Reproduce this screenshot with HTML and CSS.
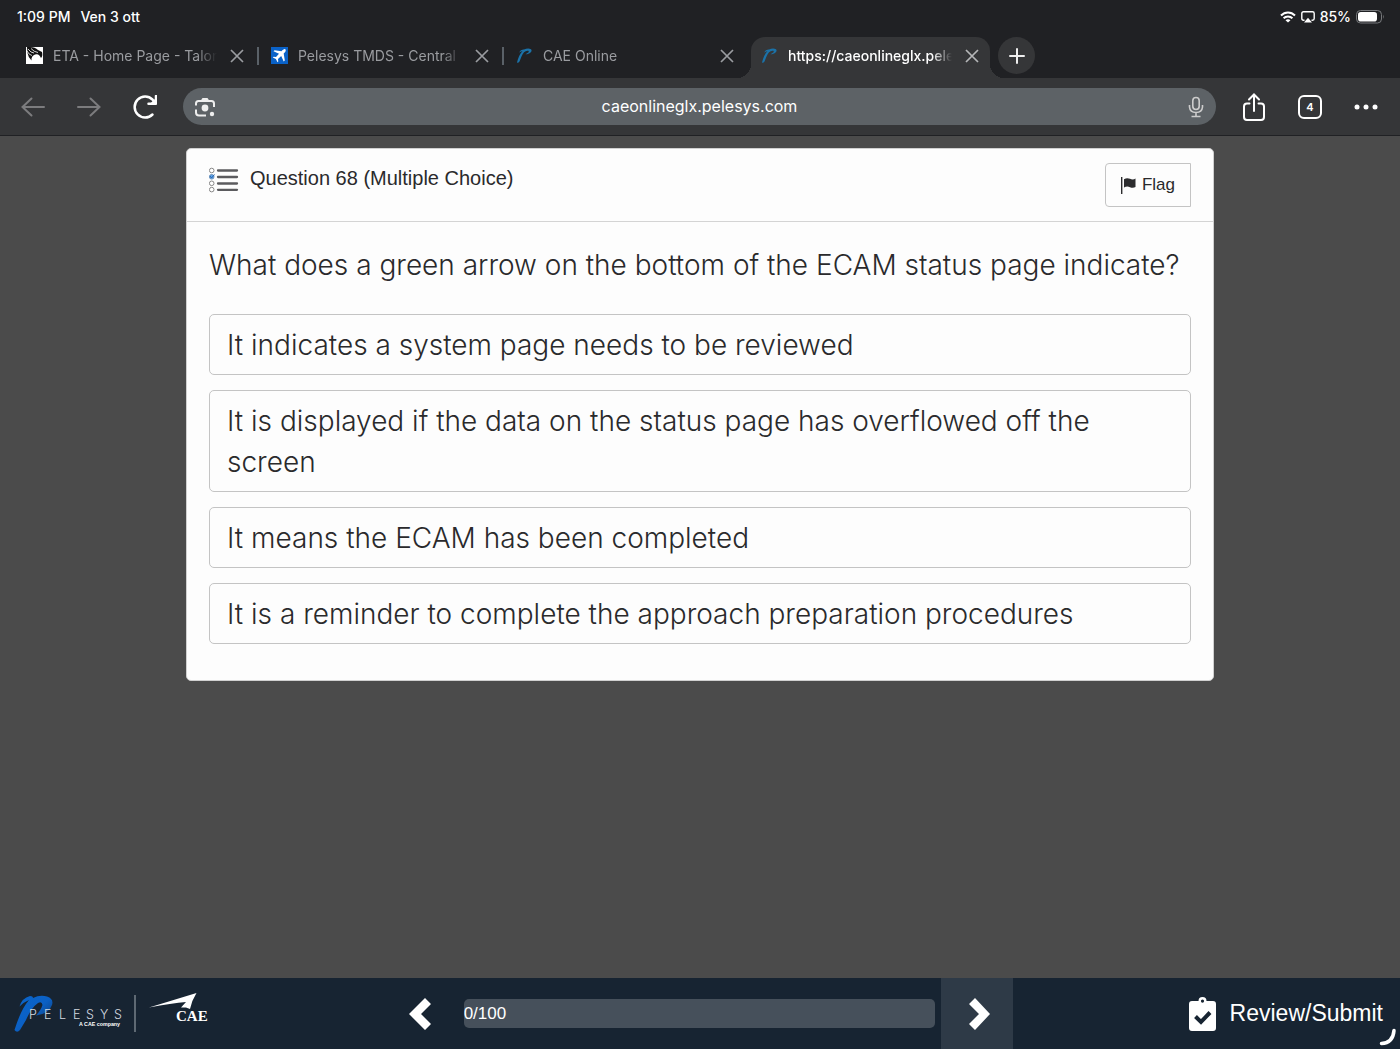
FILE: index.html
```html
<!DOCTYPE html>
<html lang="en">
<head>
<meta charset="utf-8">
<meta name="viewport" content="width=device-width, initial-scale=1">
<title>CAE Online</title>
<link rel="stylesheet" href="styles.css">
</head>
<body>
<svg class="defs" width="0" height="0" aria-hidden="true">
  <symbol id="close" viewBox="0 0 14 14"><path d="M1 1 13 13M13 1 1 13" fill="none" stroke="currentColor" stroke-width="1.7"/></symbol>
  <symbol id="pelesys" viewBox="0 0 17 17"><path d="M1 15.500C2 11 4 6.500 6.500 4L3 5.500Q5 2 8 2.500Q12 .800 15 2.200C17 4.500 13.500 7.300 9.500 7.200C12 6.200 13.600 4.600 12.300 3.800C9.500 3.200 7 5.500 5.500 9.500L3.500 14.500Q2 16.500 1 15.500Z" fill="#1b72a8"/></symbol>
</svg>

<header class="browser">
  <div class="status">
    <div class="status-group"><span>1:09 PM</span><span>Ven 3 ott</span></div>
    <div class="status-icons">
      <svg width="16" height="12" viewBox="0 0 16 12" fill="none" stroke="#fff" stroke-width="2"><path d="M1 4.500C5 .4 11 .4 15 4.500M3.600 7.200C6 4.800 10 4.800 12.400 7.200"/><path d="M8 11.600 5.500 9.200Q8 7.200 10.500 9.200Z" fill="#fff" stroke="none"/></svg>
      <svg width="14" height="12" viewBox="0 0 14 12"><path d="M3.500 9.200H2.500Q.8 9.200.8 7.500V2.500Q.8.800 2.500.800H11.500Q13.200.800 13.200 2.500V7.500Q13.200 9.200 11.500 9.200H10.500" fill="none" stroke="#fff" stroke-width="1.400"/><path d="M7 6.800 11 11.500H3Z" fill="#fff"/></svg>
      <span>85%</span>
      <svg width="28" height="14" viewBox="0 0 28 14"><rect x=".5" y=".5" width="25" height="12.500" rx="4" fill="none" stroke="#77797c"/><rect x="2" y="2" width="19" height="9.500" rx="2.800" fill="#fff"/><path d="M27 4.800Q28.400 6.800 27 8.800Z" fill="#77797c"/></svg>
    </div>
  </div>

  <nav class="tabs" aria-label="Open tabs">
    <div class="tab">
      <svg class="favicon" viewBox="0 0 17 17"><path fill="#fff" d="M0 0h17v17H0z"/><path d="M1 0H4Q9 0 12 3L16 5Q17 9 15 11Q13 6 9 7.500Q5 9 5.500 13.500Q2 10 1.500 6Z" fill="#111"/><path d="M2 2Q5 6 8 6M1 4Q3 8 6 8.500M5 1.500Q8 5 12 5.500" stroke="#fff" stroke-width=".8" fill="none"/></svg>
      <a class="tab-title" href="#">ETA - Home Page - Talon</a>
      <button class="tab-close" aria-label="Close tab"><svg><use href="#close"/></svg></button>
    </div>
    <div class="tab">
      <svg class="favicon" viewBox="0 0 17 17"><path fill="#0a62c8" d="M0 0h17v17H0z"/><path d="M14.500 2.400C13.400 1.500 12 2.800 10.500 4.300L3.500 3.200 2.500 4.300 8 6.800 5 10 2.600 9.700 1.800 10.500 4.900 12.100 6.500 15.200 7.300 14.400 7 12 10.200 9 12.700 14.500 13.800 13.500 12.700 6.500C14.200 5 15.300 3.500 14.500 2.400Z" fill="#fff"/></svg>
      <a class="tab-title" href="#">Pelesys TMDS - Central</a>
      <button class="tab-close" aria-label="Close tab"><svg><use href="#close"/></svg></button>
    </div>
    <div class="tab">
      <svg class="favicon"><use href="#pelesys"/></svg>
      <a class="tab-title" href="#">CAE Online</a>
      <button class="tab-close" aria-label="Close tab"><svg><use href="#close"/></svg></button>
    </div>
    <div class="tab tab-active">
      <svg class="favicon"><use href="#pelesys"/></svg>
      <a class="tab-title" href="#" aria-current="page">https://caeonlineglx.pele</a>
      <button class="tab-close" aria-label="Close tab"><svg><use href="#close"/></svg></button>
    </div>
    <button class="new-tab" aria-label="New tab"><svg width="16" height="16" viewBox="0 0 16 16"><path d="M8 1V15M1 8H15" stroke="#eee" stroke-width="2" stroke-linecap="round"/></svg></button>
  </nav>

  <div class="toolbar">
    <div class="tools">
      <button class="tool tool-dim" aria-label="Back"><svg viewBox="0 0 24 24"><path d="M23 12H1.500M10.500 3.500 1.500 12 10.500 20.500"/></svg></button>
      <button class="tool tool-dim" aria-label="Forward"><svg viewBox="0 0 24 24"><path d="M1 12H22.500M13.500 3.500 22.500 12 13.500 20.500"/></svg></button>
      <button class="tool" aria-label="Reload"><svg viewBox="0 0 24 24"><path d="M19.500 19.500A10.500 10.500 0 1 1 19.500 4.500L22 8" stroke-width="2.500"/><path d="M23 1V8.700H15.500" stroke-width="2.500" stroke-linejoin="round"/><path d="M23 3V8.700H17Z" fill="#fff" stroke="none"/></svg></button>
    </div>
    <div class="omnibox">
      <svg width="20" height="20" viewBox="0 0 20 20" fill="none" stroke="#eee" stroke-width="2"><path d="M1 8.500V6.500Q1 4 3.500 4H16.500Q19 4 19 6.500V10M1 12.500V15.500Q1 18.500 4 18.500H11"/><path d="M5.500 4 7.500 1H12.500L14.500 4Z" fill="#eee" stroke="none"/><circle cx="10" cy="11" r="3.400" fill="#eee" stroke="none"/><circle cx="17" cy="17" r="2.200" fill="#eee" stroke="none"/></svg>
      <input class="address" type="text" aria-label="Address" value="caeonlineglx.pelesys.com">
      <svg width="20" height="22" viewBox="0 0 20 22" fill="none" stroke="#ccc" stroke-width="1.600"><rect x="6.800" y="1.500" width="6.400" height="12" rx="3.200"/><path d="M3.500 9V11Q4 16.500 10 16.500T16.500 11V9M10 16.500V20.500M5.500 20.500H14.500"/></svg>
    </div>
    <div class="tools">
      <button class="tool" aria-label="Share"><svg viewBox="0 0 24 28"><path d="M7.500 10.500H5Q2 10.500 2 13.500V24Q2 27 5 27H19Q22 27 22 24V13.500Q22 10.500 19 10.500H16.500M12 18V2M7 6.500 12 1.500 17 6.500" stroke-width="2"/></svg></button>
      <button class="tool tab-count" aria-label="Show 4 tabs">4</button>
      <button class="tool" aria-label="More"><svg viewBox="0 0 24 24"><g fill="#fff" stroke="none"><circle cx="3" cy="12" r="2.500"/><circle cx="12" cy="12" r="2.500"/><circle cx="21" cy="12" r="2.500"/></g></svg></button>
    </div>
  </div>
</header>

<main class="content">
  <section class="card">
    <div class="card-head">
      <svg width="30" height="26" viewBox="0 0 30 26"><path d="M9 3.500H28M9 10H28M9 16.500H28M9 22.800H28" stroke="#5b5b5e" stroke-width="2.300" stroke-linecap="round"/><g fill="#fff" stroke="#888"><circle cx="2.700" cy="3.500" r="2.300"/><circle cx="2.700" cy="9.800" r="2.300" fill="#5ca4ec" stroke="#6a90b8"/><circle cx="2.700" cy="16.300" r="2.300"/><circle cx="2.700" cy="22.600" r="2.300"/></g><path d="M1 9 2.500 11 5.500 7.500" fill="none" stroke="#2462ad"/></svg>
      <h1 class="card-title">Question 68 (Multiple Choice)</h1>
      <button class="flag"><svg width="15" height="17" viewBox="0 0 15 17" fill="#2c2c2e"><path d="M0 0H1.400V17H0ZM3 2.200Q6 .3 9 1.800T14.500 1.500V10Q12 11.500 9 10.200T3 10.500Z"/></svg>Flag</button>
    </div>
    <div class="card-body">
      <p class="question">What does a green arrow on the bottom of the ECAM status page indicate?</p>
      <div class="options">
        <button class="option">It indicates a system page needs to be reviewed</button>
        <button class="option">It is displayed if the data on the status page has overflowed off the screen</button>
        <button class="option">It means the ECAM has been completed</button>
        <button class="option">It is a reminder to complete the approach preparation procedures</button>
      </div>
    </div>
  </section>
</main>

<footer class="footer">
  <div class="brand">
    <svg width="200" height="48" viewBox="0 0 200 48" role="img" aria-label="Pelesys, a CAE company">
      <defs><linearGradient id="blue" x1="0" y1="0" x2="1" y2="1"><stop offset="0" stop-color="#0a66cc"/><stop offset=".5" stop-color="#0b60c4"/><stop offset=".8" stop-color="#0f4180"/></linearGradient></defs>
      <path d="M.5 40C5 26 9 17 15 10Q10 12 5.500 16.500Q8 8 16 6Q19 6 19 8Q26 4.500 33 6.500Q40 9 38 15Q35 24 22 25.500Q27 20 28.500 15Q28 11 24 13Q17 18 12 30L6 40Q3 43.500 .5 40Z" fill="url(#blue)"/>
      <g fill="#d5dae0" font-family="Inter, sans-serif" font-size="12.500" font-weight="300"><text x="15" y="29">P</text><text x="30" y="29">E</text><text x="45" y="29">L</text><text x="59" y="29">E</text><text x="72" y="29">S</text><text x="86" y="29">Y</text><text x="100" y="29">S</text></g>
      <text x="65" y="36" fill="#fff" font-family="Liberation Sans, sans-serif" font-size="5.300" font-weight="700">A CAE company</text>
      <path d="M121 5V42" stroke="#77808a" stroke-width="1.500"/>
      <path d="M135 17.500 182.500 3Q178 10 176 19L172 17.500H167L172 12Q158 13 135 17.500Z" fill="#fff"/>
      <text x="162" y="31" fill="#fff" font-family="Liberation Serif, serif" font-size="15" font-weight="700">CAE</text>
    </svg>
  </div>
  <div class="pager">
    <button class="page-button" aria-label="Previous"><svg width="22" height="32" viewBox="0 0 22 32"><path d="M16 0 22 6 12 16 22 26 16 32 0 16Z" fill="#fff"/></svg></button>
    <div class="progress" role="progressbar" aria-label="Answered" aria-valuemin="0" aria-valuemax="100" aria-valuenow="0">0/100</div>
    <button class="page-button page-next" aria-label="Next"><svg width="22" height="32" viewBox="0 0 22 32"><path d="M7 0 1 6 11 16 1 26 7 32 22 16Z" fill="#fff"/></svg></button>
  </div>
  <button class="review"><svg width="27" height="36" viewBox="0 0 27 36"><path fill-rule="evenodd" d="M3 5H9.500A4 4 0 0 1 17.500 5H24Q27 5 27 8V32Q27 35 24 35H3Q0 35 0 32V8Q0 5 3 5ZM13.500 3.500A1.600 1.600 0 1 0 13.500 6.700A1.600 1.600 0 1 0 13.500 3.500Z" fill="#fff"/><path d="M6.500 20.500 12 26 21 16.500" fill="none" stroke="#172432" stroke-width="4"/></svg>Review/Submit</button>
  <svg class="corner" width="18" height="18" viewBox="0 0 18 18" aria-hidden="true"><path d="M2.500 15.500Q14 15 15 2.500" fill="none" stroke="#fff" stroke-width="3.500" stroke-linecap="round"/></svg>
</footer>
</body>
</html>
```
FILE: styles.css
```css
* { box-sizing: border-box; }

body {
  display: flex;
  flex-direction: column;
  min-height: 100vh;
  margin: 0;
  background: #4b4b4b;
  color: #2a2a2c;
  font-family: "Liberation Sans", Arial, sans-serif;
}

button {
  padding: 0;
  border: 0;
  background: none;
  color: inherit;
  font: inherit;
  cursor: pointer;
}

a { color: inherit; text-decoration: none; }
svg { display: block; flex: none; }
.defs { position: absolute; }

/* Browser chrome */
.browser {
  background: #202124;
  color: #fff;
  font-family: Inter, sans-serif;
}

.status {
  display: flex;
  justify-content: space-between;
  align-items: center;
  height: 33px;
  padding: 0 16px 0 17px;
  font-size: 14px;
  font-weight: 500;
}

.status-group { display: flex; gap: 10px; }
.status-icons { display: flex; align-items: center; gap: 5px; }

.tabs {
  display: flex;
  padding: 4px 16px 0;
  height: 45px;
}

.tab {
  display: flex;
  align-items: center;
  gap: 10px;
  width: 239px;
  height: 37px;
  margin-right: 6px;
  padding: 0 8px 0 10px;
  color: #9a9ca0;
  font-size: 14px;
}

.tab:nth-child(-n+2) {
  background: linear-gradient(#5a6168, #5a6168) no-repeat right center / 2px 18px;
  width: 243px;
  margin-right: 2px;
  padding-right: 12px;
}

.favicon { width: 17px; height: 17px; }

.tab-title {
  flex: 1;
  overflow: hidden;
  white-space: nowrap;
  -webkit-mask-image: linear-gradient(to left, transparent, #000 20px);
  mask-image: linear-gradient(to left, transparent, #000 20px);
}

.tab-close { display: grid; place-items: center; width: 20px; height: 20px; }
.tab-close svg { width: 14px; height: 14px; }

.tab-active {
  position: relative;
  height: 41px;
  padding-bottom: 4px;
  border-radius: 14px 14px 0 0;
  background: #353638;
  color: #fff;
  font-weight: 500;
}

.tab-active .tab-close { color: #b5b6b8; }

.tab-active::before,
.tab-active::after {
  content: "";
  position: absolute;
  bottom: 0;
  width: 14px;
  height: 14px;
}

.tab-active::before { right: 100%; background: radial-gradient(circle at 0 0, transparent 14px, #353638 14px); }
.tab-active::after { left: 100%; background: radial-gradient(circle at 100% 0, transparent 14px, #353638 14px); }

.new-tab {
  position: relative;
  display: grid;
  place-items: center;
  width: 37px;
  height: 37px;
  margin-left: 2px;
  border-radius: 50%;
  background: #353638;
}

.toolbar {
  display: flex;
  align-items: center;
  gap: 26px;
  height: 58px;
  padding: 0 22px 0 21px;
  border-bottom: 1px solid #202124;
  background: #353638;
}

.tools { display: flex; align-items: center; gap: 32px; }

.tool {
  display: grid;
  place-items: center;
  width: 24px;
  height: 28px;
}

.tool svg {
  width: 100%;
  fill: none;
  stroke: #fff;
  stroke-width: 2;
  stroke-linecap: round;
}

.tool-dim svg { stroke: #7c7c7e; }

.tab-count {
  height: 24px;
  border: 2px solid #fff;
  border-radius: 6px;
  font-size: 11px;
  font-weight: 600;
}

.omnibox {
  flex: 1;
  display: flex;
  align-items: center;
  height: 37px;
  padding: 0 10px 0 12px;
  border-radius: 19px;
  background: #5d6266;
}

.address {
  flex: 1;
  min-width: 0;
  padding: 0 2px 2px 0;
  border: 0;
  outline: 0;
  background: none;
  color: #fff;
  font-family: inherit;
  font-size: 16px;
  text-align: center;
}

/* Question card */
.content { flex: 1; padding: 12px 186px 24px; }

.card {
  border: 1px solid #d0d0d0;
  border-radius: 5px;
  background: #fdfdfd;
}

.card-head {
  display: flex;
  align-items: flex-start;
  gap: 11px;
  padding: 14px 22px;
  border-bottom: 1px solid #d4d4d4;
}

.card-head > svg { margin-top: 4px; }

.card-title {
  flex: 1;
  margin: 3px 0 0;
  font-size: 20px;
  font-weight: 400;
  line-height: 24px;
}

.flag {
  display: flex;
  align-items: center;
  justify-content: center;
  gap: 6px;
  width: 86px;
  height: 44px;
  border: 1px solid #c4c4c4;
  border-radius: 4px 0 0 4px;
  font-size: 17px;
}

.card-body {
  padding: 23px 22px 36px;
  font-family: Inter, sans-serif;
  font-size: 28px;
  font-weight: 300;
  line-height: 41px;
}

.question { margin: 0 0 28px; }
.options { display: flex; flex-direction: column; gap: 15px; }

.option {
  padding: 10px 17px 8px;
  border: 1px solid #c4c4c4;
  border-radius: 5px;
  text-align: left;
}

/* Footer */
.footer {
  position: relative;
  display: grid;
  grid-template-columns: 1fr 46% 1fr;
  align-items: center;
  padding: 0 17px 0 14px;
  background: #172432;
  color: #fff;
}

.pager { display: flex; align-items: center; }

.page-button {
  display: grid;
  place-items: center;
  width: 72px;
  height: 71px;
}

.page-next { padding-left: 3px; background: #2e3a47; }

.progress {
  flex: 1;
  height: 29px;
  margin: 0 6px 0 8px;
  border-radius: 5px;
  background: #46505b;
  font-size: 17px;
  line-height: 29px;
}

.review {
  display: flex;
  align-items: center;
  justify-self: end;
  gap: 14px;
  font-size: 23px;
}

.corner { position: absolute; right: 3px; bottom: 3px; }
```
